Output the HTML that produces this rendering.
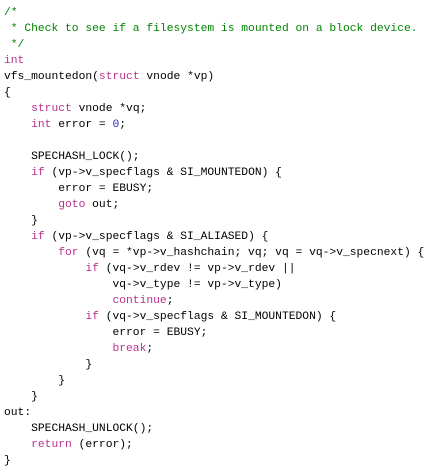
<!DOCTYPE html><html><head><style>
body{margin:0;background:#fff;width:435px;height:468px;overflow:hidden}
pre{margin:0;position:absolute;left:4px;top:5px;font-family:"Liberation Mono",monospace;font-size:11.3px;line-height:16px;color:#000}
.c{color:#008400}.k{color:#b8318e}.n{color:#2b22d0}
</style></head><body><pre><span class="c">/*
 * Check to see if a filesystem is mounted on a block device.
 */</span>
<span class="k">int</span>
vfs_mountedon(<span class="k">struct</span> vnode *vp)
{
    <span class="k">struct</span> vnode *vq;
    <span class="k">int</span> error = <span class="n">0</span>;

    SPECHASH_LOCK();
    <span class="k">if</span> (vp-&gt;v_specflags &amp; SI_MOUNTEDON) {
        error = EBUSY;
        <span class="k">goto</span> out;
    }
    <span class="k">if</span> (vp-&gt;v_specflags &amp; SI_ALIASED) {
        <span class="k">for</span> (vq = *vp-&gt;v_hashchain; vq; vq = vq-&gt;v_specnext) {
            <span class="k">if</span> (vq-&gt;v_rdev != vp-&gt;v_rdev ||
                vq-&gt;v_type != vp-&gt;v_type)
                <span class="k">continue</span>;
            <span class="k">if</span> (vq-&gt;v_specflags &amp; SI_MOUNTEDON) {
                error = EBUSY;
                <span class="k">break</span>;
            }
        }
    }
out:
    SPECHASH_UNLOCK();
    <span class="k">return</span> (error);
}</pre></body></html>
